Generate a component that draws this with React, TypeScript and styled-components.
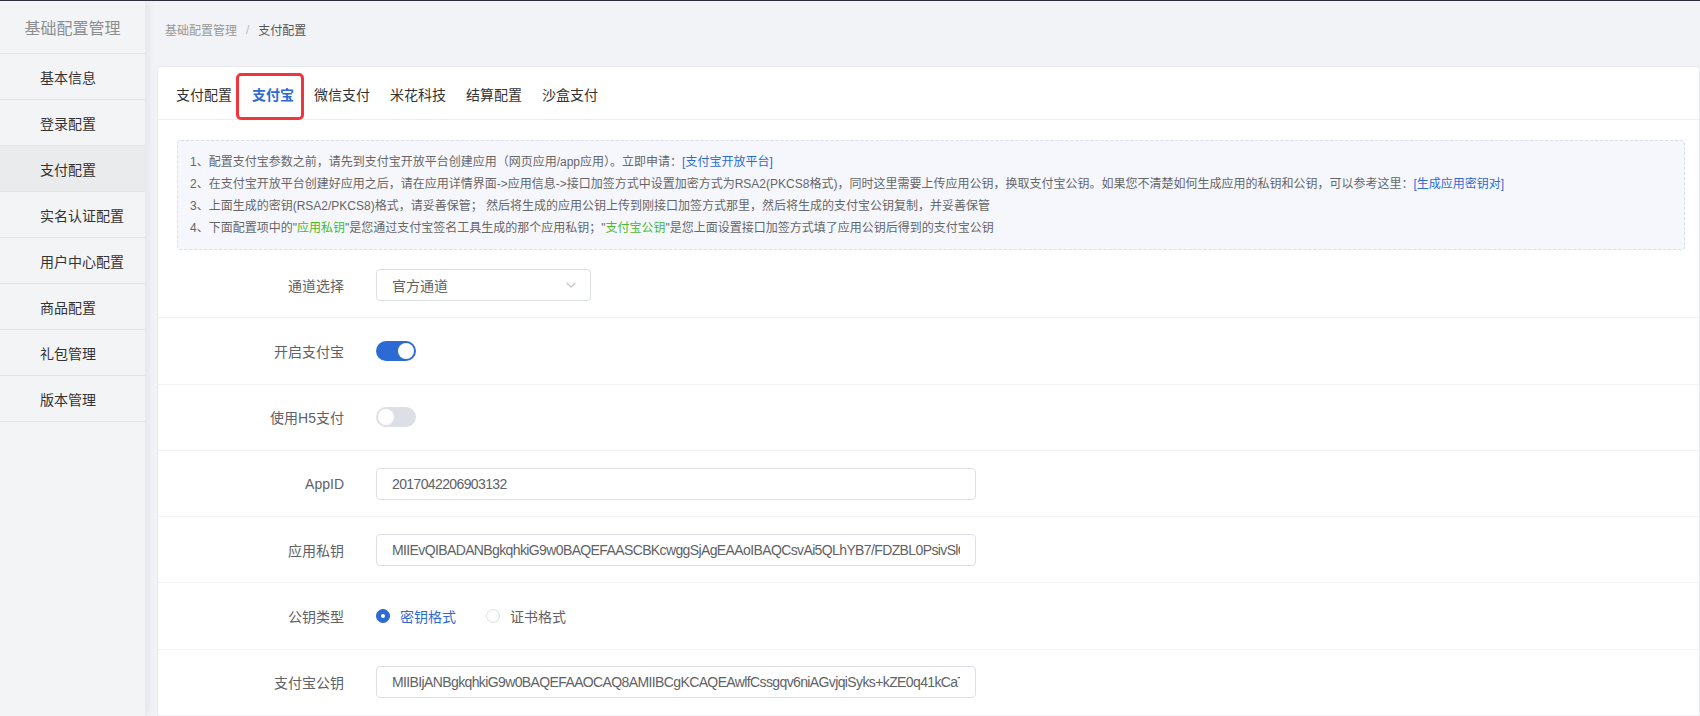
import { FC } from "react";
import styled, { createGlobalStyle, css } from "styled-components";

const GlobalStyle = createGlobalStyle`
    * {
        box-sizing: border-box;
    }
    body {
        margin: 0;
        font-family: "Liberation Sans", "Noto Sans CJK SC", sans-serif;
        background: #f2f3f6;
        color: #303133;
    }
`;

const BLUE = "#2d6ad3";

const Shell = styled.div`
    display: flex;
    height: 100vh;
    border-top: 1px solid #2c303b;
    overflow: hidden;
`;

const Sidebar = styled.aside`
    width: 145px;
    flex-shrink: 0;
    background: #f3f4f6;
    box-shadow: 3px 0 8px rgba(40, 60, 110, 0.08);
    position: relative;
    z-index: 1;
`;

const SideTitle = styled.div`
    height: 53px;
    display: flex;
    align-items: center;
    justify-content: center;
    border-bottom: 1px solid #e3e4e8;
    font-size: 16px;
    color: #8e8e8e;
`;

const MenuItem = styled.div<{ $active?: boolean }>`
    height: 46px;
    display: flex;
    align-items: center;
    padding-left: 40px;
    border-bottom: 1px solid #e3e4e8;
    font-size: 14px;
    color: #333;
    background: ${(p) => (p.$active ? "#eaebed" : "transparent")};
`;

const Main = styled.main`
    flex: 1;
    min-width: 0;
    padding-left: 12px;
`;

const Breadcrumb = styled.div`
    height: 57px;
    display: flex;
    align-items: center;
    padding-left: 8px;
    font-size: 12px;
    color: #999;
`;

const Crumb = styled.span<{ $current?: boolean }>`
    color: ${(p) => (p.$current ? "#555" : "#999")};
`;

const CrumbSep = styled.span`
    margin: 0 9px;
    color: #b8bcc6;
`;

const Card = styled.section`
    margin-top: 8px;
    background: #fff;
    border: 1px solid #e8eaef;
    border-radius: 4px;
    min-height: 700px;
`;

const TabNav = styled.nav`
    height: 53px;
    display: flex;
    padding: 2px 0 0 8px;
    border-bottom: 1px solid #eceef3;
`;

const Tab = styled.div<{ $active?: boolean }>`
    position: relative;
    display: flex;
    align-items: center;
    padding: 0 10px;
    font-size: 14px;
    color: #333;
    ${(p) =>
        p.$active &&
        css`
            color: ${BLUE};
            font-weight: 700;
            &::after {
                content: "";
                position: absolute;
                top: 4px;
                bottom: -1px;
                left: -6px;
                right: 0;
                border: 3px solid #f2343c;
                border-radius: 5px;
            }
        `}
`;

const Notice = styled.div`
    margin: 20px 14px 2px 19px;
    padding: 10px 12px;
    background: #f5f7fd;
    border: 1px dashed #d8dff0;
    border-radius: 4px;
    font-size: 12px;
    line-height: 22px;
    color: #666;
`;

const NoticeLine = styled.div`
    white-space: nowrap;
`;

const Link = styled.span`
    color: ${BLUE};
`;

const Mark = styled.span`
    color: #4cb82b;
`;

const FormRow = styled.div`
    height: 66.3px;
    display: flex;
    align-items: center;
    border-bottom: 1px solid #f0f2f6;
`;

const RowLabel = styled.label`
    width: 186px;
    margin-right: 32px;
    text-align: right;
    font-size: 14px;
    color: #606266;
`;

const SelectBox = styled.div`
    width: 215px;
    height: 32px;
    display: flex;
    align-items: center;
    justify-content: space-between;
    padding: 0 13px 0 15px;
    border: 1px solid #dcdfe6;
    border-radius: 4px;
    font-size: 14px;
    color: #606266;
`;

const TextInput = styled.input`
    width: 600px;
    height: 32px;
    padding: 0 15px;
    border: 1px solid #dcdfe6;
    border-radius: 4px;
    font-family: "Liberation Sans", "Noto Sans CJK SC", sans-serif;
    font-size: 14px;
    letter-spacing: -0.62px;
    color: #606266;
    outline: none;
`;

const Switch = styled.span<{ $on?: boolean }>`
    position: relative;
    width: 40px;
    height: 20px;
    border-radius: 10px;
    background: ${(p) => (p.$on ? BLUE : "#dcdfe6")};
    &::after {
        content: "";
        position: absolute;
        top: 2px;
        left: ${(p) => (p.$on ? "22px" : "2px")};
        width: 16px;
        height: 16px;
        border-radius: 50%;
        background: #fff;
    }
`;

const RadioGroup = styled.div`
    display: flex;
    align-items: center;
    gap: 30px;
`;

const RadioOption = styled.span<{ $checked?: boolean }>`
    display: flex;
    align-items: center;
    gap: 10px;
    font-size: 14px;
    color: ${(p) => (p.$checked ? BLUE : "#606266")};
`;

const RadioDot = styled.span<{ $checked?: boolean }>`
    width: 14px;
    height: 14px;
    border-radius: 50%;
    border: 1px solid ${(p) => (p.$checked ? BLUE : "#dcdfe6")};
    background: ${(p) => (p.$checked ? BLUE : "#fff")};
    display: flex;
    align-items: center;
    justify-content: center;
    &::after {
        content: "";
        width: 4px;
        height: 4px;
        border-radius: 50%;
        background: ${(p) => (p.$checked ? "#fff" : "transparent")};
    }
`;

const menu = ["基本信息", "登录配置", "支付配置", "实名认证配置", "用户中心配置", "商品配置", "礼包管理", "版本管理"];
const tabs = ["支付配置", "支付宝", "微信支付", "米花科技", "结算配置", "沙盒支付"];

const privateKey =
    "MIIEvQIBADANBgkqhkiG9w0BAQEFAASCBKcwggSjAgEAAoIBAQCsvAi5QLhYB7/FDZBL0PsivSlQm3Rk8aWzT1vYcN2pHe";
const publicKey =
    "MIIBIjANBgkqhkiG9w0BAQEFAAOCAQ8AMIIBCgKCAQEAwlfCssgqv6niAGvjqiSyks+kZE0q41kCaT7xPmd0Qh3LuB";

const Chevron: FC = () => (
    <svg width="12" height="12" viewBox="0 0 12 12" fill="none">
        <path d="M2 4.2l4 3.8 4-3.8" stroke="#c0c4cc" strokeWidth="1.2" strokeLinecap="round" strokeLinejoin="round" />
    </svg>
);

const App: FC = () => {
    return (
        <>
            <GlobalStyle />
            <Shell>
                <Sidebar>
                    <SideTitle>基础配置管理</SideTitle>
                    {menu.map((m) => (
                        <MenuItem key={m} $active={m === "支付配置"}>
                            {m}
                        </MenuItem>
                    ))}
                </Sidebar>
                <Main>
                    <Breadcrumb>
                        <Crumb>基础配置管理</Crumb>
                        <CrumbSep>/</CrumbSep>
                        <Crumb $current>支付配置</Crumb>
                    </Breadcrumb>
                    <Card>
                        <TabNav>
                            {tabs.map((t) => (
                                <Tab key={t} $active={t === "支付宝"}>
                                    {t}
                                </Tab>
                            ))}
                        </TabNav>
                        <Notice>
                            <NoticeLine>
                                1、配置支付宝参数之前，请先到支付宝开放平台创建应用（网页应用/app应用）。立即申请：
                                <Link>[支付宝开放平台]</Link>
                            </NoticeLine>
                            <NoticeLine>
                                2、在支付宝开放平台创建好应用之后，请在应用详情界面-&gt;应用信息-&gt;接口加签方式中设置加密方式为RSA2(PKCS8格式)，同时这里需要上传应用公钥，换取支付宝公钥。如果您不清楚如何生成应用的私钥和公钥，可以参考这里：
                                <Link>[生成应用密钥对]</Link>
                            </NoticeLine>
                            <NoticeLine>
                                3、上面生成的密钥(RSA2/PKCS8)格式，请妥善保管； 然后将生成的应用公钥上传到刚接口加签方式那里，然后将生成的支付宝公钥复制，并妥善保管
                            </NoticeLine>
                            <NoticeLine>
                                4、下面配置项中的"<Mark>应用私钥</Mark>"是您通过支付宝签名工具生成的那个应用私钥；"<Mark>支付宝公钥</Mark>"是您上面设置接口加签方式填了应用公钥后得到的支付宝公钥
                            </NoticeLine>
                        </Notice>

                        <FormRow>
                            <RowLabel>通道选择</RowLabel>
                            <SelectBox>
                                官方通道
                                <Chevron />
                            </SelectBox>
                        </FormRow>
                        <FormRow>
                            <RowLabel>开启支付宝</RowLabel>
                            <Switch $on />
                        </FormRow>
                        <FormRow>
                            <RowLabel>使用H5支付</RowLabel>
                            <Switch />
                        </FormRow>
                        <FormRow>
                            <RowLabel>AppID</RowLabel>
                            <TextInput readOnly value="2017042206903132" />
                        </FormRow>
                        <FormRow>
                            <RowLabel>应用私钥</RowLabel>
                            <TextInput readOnly value={privateKey} />
                        </FormRow>
                        <FormRow>
                            <RowLabel>公钥类型</RowLabel>
                            <RadioGroup>
                                <RadioOption $checked>
                                    <RadioDot $checked />
                                    密钥格式
                                </RadioOption>
                                <RadioOption>
                                    <RadioDot />
                                    证书格式
                                </RadioOption>
                            </RadioGroup>
                        </FormRow>
                        <FormRow>
                            <RowLabel>支付宝公钥</RowLabel>
                            <TextInput readOnly value={publicKey} />
                        </FormRow>
                    </Card>
                </Main>
            </Shell>
        </>
    );
};

export default App;
